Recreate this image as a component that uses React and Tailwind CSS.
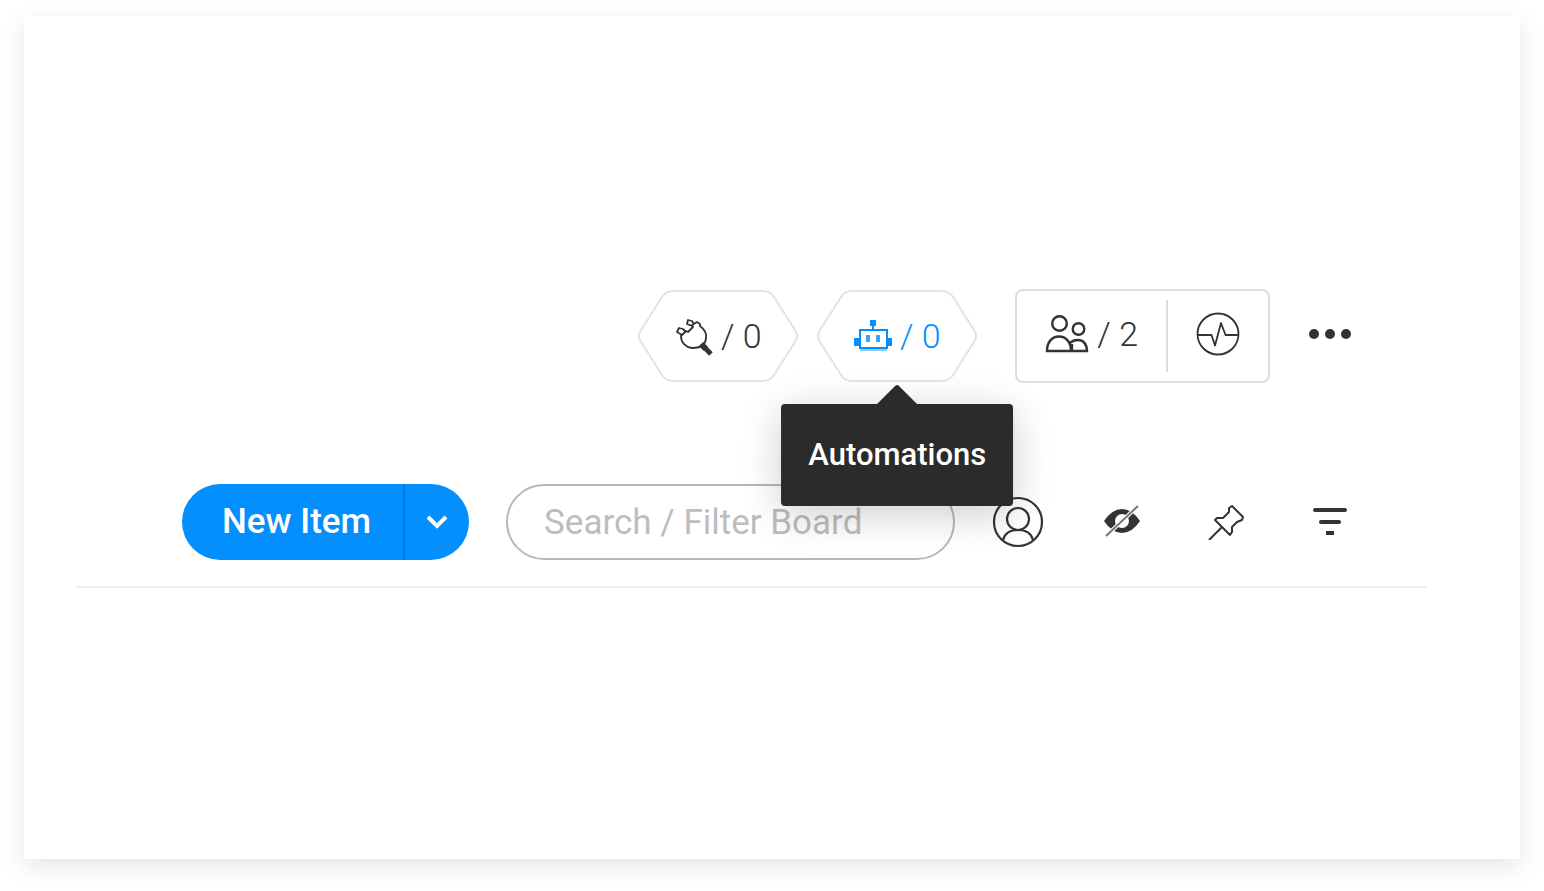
const HexButton = ({ label, count, className, children }) => (
  <button
    type="button"
    aria-label={label}
    className={`grid h-[94px] w-40 cursor-pointer place-items-center ${className}`}
  >
    <svg viewBox="0 0 160 94" fill="none" className="col-start-1 row-start-1 h-[94px] w-40">
      <path
        d="M35 2H125Q132 2 136 8L157 41Q161 47 157 53L136 86Q132 92 125 92H35Q28 92 24 86L3 53Q-1 47 3 41L24 8Q28 2 35 2Z"
        stroke="#e3e3e3"
        strokeWidth="2"
      />
    </svg>
    <span className="col-start-1 row-start-1 flex items-center gap-2">
      {children}
      <span className="text-[34px] leading-10 font-light">/ {count}</span>
    </span>
  </button>
);

const IconButton = ({ label, children }) => (
  <button
    type="button"
    aria-label={label}
    className="flex h-13 w-13 shrink-0 cursor-pointer items-center justify-center"
  >
    {children}
  </button>
);

const PlugIcon = () => (
  <svg viewBox="4 4 38 40" fill="none" stroke="currentColor" strokeWidth="1.8" strokeLinejoin="round" className="h-10 w-[38px]">
    <path d="M10 24L15 19L17 20L22 15L21 13L26 10L29 12V14C33 17 36 21 35 26C35 29 34 31 32 33C29 36 25 36 21 36C15 35 10 31 10 24Z" />
    <path d="M21 14L16 12L17 8L21 9L23 12M11 23L6 20L8 16L12 17L15 20" />
    <path d="M31 33L40 42" strokeWidth="5" />
    <path d="M30 32L35 37" strokeWidth="6" />
  </svg>
);

const RobotIcon = () => (
  <svg viewBox="0 0 38 40" fill="currentColor" className="h-10 w-[38px]">
    <path d="M16 4h6v6h-2v4h-2v-4h-2z" />
    <path d="M5 13h29v20H5zM7 15v16h25V15z" fillRule="evenodd" />
    <path d="M0 22h5v8H0zM33 22h5v8h-5z" />
    <path d="M12 19h4v7h-4zM22 19h4v7h-4z" opacity=".8" />
    <path d="M6 33h27v2H6z" fill="#8fccff" />
  </svg>
);

const PeopleIcon = () => (
  <svg viewBox="0 0 44 40" fill="none" stroke="currentColor" strokeWidth="2.4" className="h-10 w-11">
    <circle cx="14.5" cy="9.5" r="7.3" />
    <circle cx="33.5" cy="15" r="5.8" />
    <path d="M2 37C2 28 7 22.5 14 22.5S26 28 26 37ZM25 29C27 27 30 26 33 26C38 26 42 30 42 37H27V30" />
  </svg>
);

const ActivityIcon = () => (
  <svg viewBox="0 0 44 44" fill="none" stroke="currentColor" strokeWidth="1.8" className="h-11 w-11">
    <circle cx="22" cy="22" r="20.5" />
    <path d="M2 23H15.5L19 33.5L25 11L29.5 23H42" strokeLinejoin="round" />
  </svg>
);

const Tooltip = ({ text }) => (
  <div
    role="tooltip"
    className="absolute top-full left-1/2 z-10 mt-[21px] -translate-x-1/2 rounded-sm bg-[#2b2b2b] px-[27px] py-[31px] text-[31px] leading-10 font-medium text-white shadow-[0_8px_40px_rgba(0,0,0,0.2)]"
  >
    <svg viewBox="0 0 40 20" fill="#2b2b2b" className="absolute bottom-full left-1/2 h-5 w-10 -translate-x-1/2">
      <path d="M0 20L18 2Q20 0 22 2L40 20Z" />
    </svg>
    {text}
  </div>
);

const BoardHeader = () => (
  <div className="flex items-center justify-end">
    <HexButton label="Integrations" count={0} className="text-[#333333]">
      <PlugIcon />
    </HexButton>
    <div className="relative ml-[19px]">
      <HexButton label="Automations" count={0} className="text-[#048fff]">
        <RobotIcon />
      </HexButton>
      <Tooltip text="Automations" />
    </div>
    <div className="ml-[38px] flex h-[94px] items-center rounded-lg border-2 border-[#dedede] text-[#333333]">
      <button
        type="button"
        aria-label="Board members"
        className="flex h-[72px] cursor-pointer items-center gap-2 border-r-2 border-[#dedede] px-7 pb-1"
      >
        <PeopleIcon />
        <span className="text-[34px] leading-10 font-light">/ 2</span>
      </button>
      <button type="button" aria-label="Activity log" className="cursor-pointer px-7 pb-1">
        <ActivityIcon />
      </button>
    </div>
    <div className="ml-[34px] flex pb-1 text-[#333333]">
      <IconButton label="More options">
        <svg viewBox="0 0 44 12" fill="currentColor" className="h-3 w-11">
          <circle cx="6" cy="6" r="5" />
          <circle cx="22" cy="6" r="5" />
          <circle cx="38" cy="6" r="5" />
        </svg>
      </IconButton>
    </div>
  </div>
);

const BoardToolbar = () => (
  <div className="flex items-center gap-[37px]">
    <div className="flex h-[76px] shrink-0 overflow-hidden rounded-full bg-[#048fff] text-white">
      <button type="button" className="cursor-pointer pr-8 pl-10 text-[35px] leading-10 font-medium">
        New Item
      </button>
      <button
        type="button"
        aria-label="More item types"
        className="flex w-[66px] cursor-pointer items-center justify-center border-l-2 border-[#0379db]"
      >
        <svg viewBox="0 0 22 14" fill="none" stroke="currentColor" strokeWidth="4" className="h-3.5 w-[22px]">
          <path d="M2 2L11 11L20 2" />
        </svg>
      </button>
    </div>
    <input
      type="text"
      aria-label="Search / Filter Board"
      placeholder="Search / Filter Board"
      className="h-[76px] min-w-0 flex-1 rounded-full border-2 border-[#b8b8b8] px-9 text-[35px] leading-10 text-[#333333] outline-none placeholder:text-[#bdbdbd]"
    />
    <div className="flex gap-13 text-[#333333]">
      <IconButton label="Filter by person">
        <svg viewBox="0 0 52 52" fill="none" stroke="currentColor" strokeWidth="2.2" className="h-13 w-13">
          <circle cx="26" cy="26" r="24" />
          <circle cx="26" cy="23" r="11" />
          <path d="M11 44C13 36 20 34 26 34S39 36 41 44" />
        </svg>
      </IconButton>
      <IconButton label="Hide columns">
        <svg viewBox="0 0 36 34" fill="none" className="h-[34px] w-9">
          <path
            d="M0 16Q8 4 18 4T36 16Q28 28 18 28T0 16ZM18 9A7 7 0 0 0 18 23A7 7 0 0 0 18 9Z"
            fill="currentColor"
            fillRule="evenodd"
          />
          <path d="M2 31L34 1" stroke="#fff" strokeWidth="4" />
          <path d="M2 31L34 1" stroke="#777777" strokeWidth="2" />
        </svg>
      </IconButton>
      <IconButton label="Pin columns">
        <svg viewBox="0 0 36 36" fill="none" stroke="currentColor" strokeWidth="2" strokeLinejoin="round" className="h-9 w-9">
          <path d="M24 2L35 13L34 16L29 18L24 23V28L22 31L7 16L9 14H15L21 8V4Z" />
          <path d="M14 23L1 36" />
        </svg>
      </IconButton>
      <IconButton label="Filter">
        <svg viewBox="0 0 36 30" fill="none" stroke="currentColor" strokeWidth="4" className="h-[30px] w-9">
          <path d="M3 3H33M9 15H27" strokeLinecap="round" />
          <path d="M14 26H22" />
        </svg>
      </IconButton>
    </div>
  </div>
);

const App = () => {
  return (
    <main className="flex min-h-screen flex-col bg-white px-6 pt-4 pb-8 font-['Roboto',sans-serif]">
      <section className="flex-1 bg-white pt-[273px] pr-[94px] pl-[52px] shadow-[0_8px_24px_rgba(0,0,0,0.1)]">
        <div className="flex flex-col gap-[101px] border-b-2 border-[#ececec] pr-[70px] pb-[26px] pl-[106px]">
          <BoardHeader />
          <BoardToolbar />
        </div>
      </section>
    </main>
  );
};

export default App;
